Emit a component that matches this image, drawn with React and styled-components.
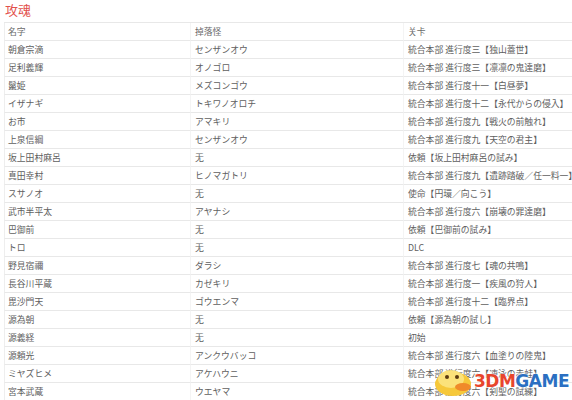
import React from "react";
import styled, { createGlobalStyle } from "styled-components";

const Global = createGlobalStyle`
  html, body { margin: 0; padding: 0; background: #fff; }
  body { width: 572px; height: 400px; overflow: hidden; }
`;

const Page = styled.div`
  position: relative;
  width: 572px;
  height: 400px;
  overflow: hidden;
  padding-left: 4px;
  box-sizing: border-box;
  font-family: "Noto Sans CJK JP", "Noto Sans CJK SC", sans-serif;
`;

const Title = styled.h2`
  margin: 0;
  height: 22px;
  padding-left: 1px;
  font-size: 13px;
  line-height: 20px;
  font-weight: 400;
  color: #e2504c;
  font-family: "Noto Sans CJK SC", "Noto Sans CJK JP", serif;
`;

const Table = styled.div`
  display: grid;
  grid-template-columns: 186px 213px 1fr;
  border-top: 1px solid #e8e8e8;
  width: 580px;
`;

const Cell = styled.div`
  height: 17px;
  border-bottom: 1px solid #e8e8e8;
  border-left: ${(p) => (p.$first ? "1px solid #eeeeee" : "1px solid #f4f4f4")};
  padding-left: ${(p) => (p.$first ? "3px" : "4px")};
  font-size: 8.8px;
  line-height: 17px;
  color: ${(p) => (p.$head ? "#6a6a6a" : "#606060")};
  white-space: nowrap;
  overflow: hidden;
`;

const Watermark = styled.div`
  position: absolute;
  right: 3px;
  bottom: 2px;
  display: flex;
  align-items: center;
`;

const Brand = styled.span`
  font-family: "DejaVu Sans", sans-serif;
  font-weight: 700;
  font-size: 17px;
  letter-spacing: -0.5px;
  color: ${(p) => p.$c};
  text-shadow: 0 0 2px #fff, 0 0 2px #fff;
`;

const rows = [
  ["朝倉宗滴", "センザンオウ", "統合本部 進行度三【独山蓋世】"],
  ["足利義輝", "オノゴロ", "統合本部 進行度三【凛凛の鬼達磨】"],
  ["鬣姫", "メズコンゴウ", "統合本部 進行度十一【白昼夢】"],
  ["イザナギ", "トキワノオロチ", "統合本部 進行度十二【永代からの侵入】"],
  ["お市", "アマキリ", "統合本部 進行度九【戦火の前触れ】"],
  ["上泉信綱", "センザンオウ", "統合本部 進行度九【天空の君主】"],
  ["坂上田村麻呂", "无", "依頼【坂上田村麻呂の試み】"],
  ["真田幸村", "ヒノマガトリ", "統合本部 進行度九【遺跡踏破／任一料一】"],
  ["スサノオ", "无", "使命【円環／向こう】"],
  ["武市半平太", "アヤナシ", "統合本部 進行度六【崩壊の罪達磨】"],
  ["巴御前", "无", "依頼【巴御前の試み】"],
  ["トロ", "无", "DLC"],
  ["野見宿禰", "ダラシ", "統合本部 進行度七【魂の共鳴】"],
  ["長谷川平蔵", "カゼキリ", "統合本部 進行度一【疾風の狩人】"],
  ["毘沙門天", "ゴウエンマ", "統合本部 進行度十二【臨界点】"],
  ["源為朝", "无", "依頼【源為朝の試し】"],
  ["源義経", "无", "初始"],
  ["源頼光", "アンクウバッコ", "統合本部 進行度六【血塗りの陸鬼】"],
  ["ミヤズヒメ", "アケハウニ", "統合本部 進行度六【凍泳の赤蛙】"],
  ["宮本武蔵", "ウエヤマ", "統合本部 進行度六【剣聖の試練】"],
];

const Duck = () => (
  <svg width="42" height="34" viewBox="0 0 42 34">
    <ellipse cx="21" cy="20" rx="18" ry="12" fill="#f6c83a" />
    <ellipse cx="19" cy="15" rx="13" ry="9" fill="#fbe27a" />
    <ellipse cx="31" cy="23" rx="8" ry="4" fill="#f08a2a" />
    <circle cx="15" cy="13" r="2" fill="#5a3a10" />
    <circle cx="25" cy="13" r="2" fill="#5a3a10" />
  </svg>
);

export default function App() {
  return (
    <>
      <Global />
      <Page>
        <Title>攻魂</Title>
        <Table>
          <Cell $first $head>名字</Cell>
          <Cell $head>掉落怪</Cell>
          <Cell $head>关卡</Cell>
          {rows.map((r, i) => (
            <React.Fragment key={i}>
              <Cell $first>{r[0]}</Cell>
              <Cell>{r[1]}</Cell>
              <Cell>{r[2]}</Cell>
            </React.Fragment>
          ))}
        </Table>
        <Watermark>
          <Duck />
          <Brand $c="#e8452c">3DM</Brand>
          <Brand $c="#2b6fc2">GAME</Brand>
        </Watermark>
      </Page>
    </>
  );
}
